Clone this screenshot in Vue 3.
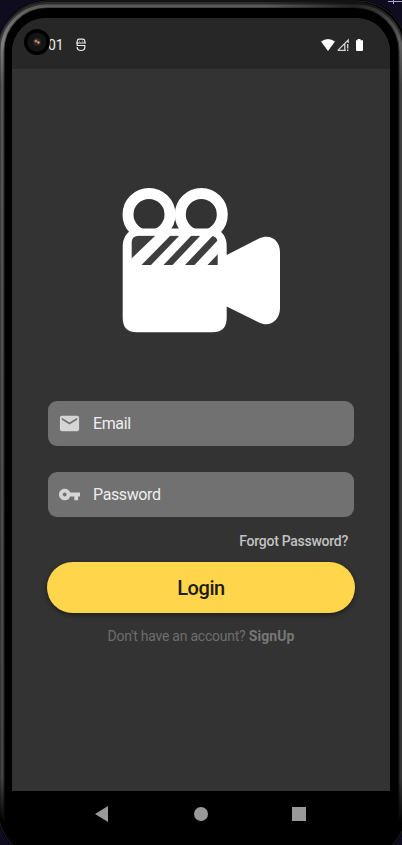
<script setup>
import { ref } from 'vue'

const email = ref('')
const password = ref('')
</script>

<template>
  <div class="device">
    <svg class="frame" viewBox="0 0 402 845" aria-hidden="true">
      <defs>
        <linearGradient id="side" x1="0" y1="0" x2="0" y2="845" gradientUnits="userSpaceOnUse">
          <stop offset="0" stop-color="#555" />
          <stop offset="0.05" stop-color="#808080" />
          <stop offset="0.1" stop-color="#555" />
          <stop offset="0.92" stop-color="#444" />
          <stop offset="0.975" stop-color="#000" />
        </linearGradient>
        <linearGradient id="shade" x1="0" y1="0" x2="402" y2="0" gradientUnits="userSpaceOnUse">
          <stop offset="0.65" stop-color="#000" stop-opacity="0" />
          <stop offset="0.88" stop-color="#000" stop-opacity="0.6" />
          <stop offset="1" stop-color="#000" stop-opacity="0.25" />
        </linearGradient>
      </defs>
      <rect x="-3" y="0" width="411" height="860" rx="50" fill="#000" />
      <rect x="-2" y="1" width="409" height="858" rx="49" fill="none" stroke="#242424" />
      <rect x="1.5" y="5" width="400" height="850" rx="46" fill="none" stroke="url(#side)" stroke-width="6" opacity="0.5" />
      <rect x="2" y="6" width="399" height="846" rx="45" fill="none" stroke="url(#side)" stroke-width="3" />
      <rect x="1.500" y="5" width="400" height="850" rx="45" fill="none" stroke="url(#shade)" stroke-width="6" />
      <rect x="5" y="9" width="393" height="850" rx="42" fill="#000" />
      <path d="M388 1.5h14M393.500 0v4" stroke="#aaa5d5" fill="none" />
    </svg>

    <div class="screen">
      <header class="status">
        <span class="time">01</span>
        <svg class="debug" viewBox="0 0 12 14">
          <path d="M2.200 4.500V3Q2.500 1.200 4 1.200h4Q9.500 1.200 9.800 3V4.500M1 5h10M2.200 5V7.500H9.800V10Q9.500 12.500 6 12.500Q2.500 12.500 2.200 10V9" fill="none" stroke="#eee" stroke-width="1.200" />
          <path d="M4 3.200h1M7 3.200h1" stroke="#aaa" />
        </svg>
        <svg class="signals" viewBox="0 0 44 14">
          <path d="M0 3.500Q7-1.500 14 3.500L7 13Z" fill="#fff" />
          <path d="M16.800 12.400L27.200 2v3M16.800 12.400h8M23.800 6v6.400" fill="none" stroke="#d5d5d5" stroke-width="1.300" />
          <path d="M26.700 6v4.500M26.700 11.500v1.500" stroke="#ddd" stroke-width="1.300" />
          <path d="M35 2.300h1.500V1h3v1.300H42V12q0 1-1 1h-5q-1 0-1-1Z" fill="#fff" />
        </svg>
        <svg class="camera" viewBox="0 0 26 26">
          <circle cx="13" cy="13" r="13" fill="#000" />
          <circle cx="13" cy="13" r="9.500" fill="#141414" />
          <circle cx="13" cy="13" r="4" fill="#30231f" />
          <circle cx="12" cy="12" r="1.600" fill="#a58770" />
          <circle cx="14.500" cy="13.500" r="1.200" fill="#c5a28a" />
        </svg>
      </header>

      <main>
        <svg class="logo" viewBox="0 0 160 148">
          <defs>
            <clipPath id="window"><path d="M10.700 58V56Q11 49.700 18 49.700H89Q96.700 49.700 96.700 57V79H10.700Z" /></clipPath>
          </defs>
          <g fill="none" stroke="#fff" stroke-width="11">
            <circle cx="28" cy="28.500" r="21" />
            <circle cx="80.300" cy="28.500" r="21" />
          </g>
          <path d="M14 42.500H94Q105.700 47 105.700 60V69L138 52.500C150 47 159 55 159 66V122C159 134 149 142 138 136.500L105.700 120.500V132Q105.700 146.300 91 146.300H16Q1.700 146.300 1.700 132V60Q2 47 14 42.500Z" fill="#fff" />
          <g clip-path="url(#window)" fill="#3e3e3e">
            <path d="M10 49.500H34.500L10 73Z" />
            <path d="M49.500 49.500H58.500L30 79H20.500Z" />
            <path d="M70.500 49.500H79.500L51.500 79H42.500Z" />
            <path d="M92 49.500L98 53L73.500 79H64Z" />
            <path d="M97 68V79H86.500Z" />
          </g>
        </svg>

        <form @submit.prevent>
          <label class="field">
            <svg viewBox="0 0 24 24"><path fill="#d5d5d5" d="M20 4H4c-1.100 0-2 .9-2 2v12c0 1.100.9 2 2 2h16c1.100 0 2-.9 2-2V6c0-1.100-.9-2-2-2Zm0 4-8 5-8-5V6l8 5 8-5v2Z" /></svg>
            <input v-model="email" type="email" placeholder="Email" />
          </label>
          <label class="field">
            <svg viewBox="0 0 24 24"><path fill="#d5d5d5" d="M12.650 10A5.990 5.990 0 0 0 7 6c-3.310 0-6 2.690-6 6s2.690 6 6 6a5.990 5.990 0 0 0 5.650-4H17v4h4v-4h2v-4H12.650ZM7 14c-1.100 0-2-.9-2-2s.9-2 2-2 2 .9 2 2-.9 2-2 2Z" /></svg>
            <input v-model="password" type="password" placeholder="Password" />
          </label>
          <a class="forgot">Forgot Password?</a>
          <button>Login</button>
        </form>
        <p>Don't have an account? <b>SignUp</b></p>
      </main>
    </div>

    <nav>
      <svg viewBox="0 0 16 16"><path d="M0 8L13 0V16Z" /></svg>
      <svg viewBox="0 0 16 16"><circle cx="8" cy="8" r="7" /></svg>
      <svg viewBox="0 0 16 16"><rect x="1" y="1" width="14" height="14" /></svg>
    </nav>
  </div>
</template>

<style>
body {
  background: #100c20;
}
</style>

<style scoped>
.device {
  position: relative;
  box-sizing: border-box;
  width: 402px;
  height: 845px;
  padding: 18px 12px 0;
  overflow: hidden;
  font-family: Roboto, sans-serif;
}
.frame {
  position: absolute;
  inset: 0;
  width: 402px;
  height: 845px;
}
.screen {
  position: relative;
  height: 773px;
  background: #333;
  border-radius: 34px 34px 0 0;
  overflow: hidden;
}
.status {
  position: relative;
  display: flex;
  align-items: center;
  box-sizing: border-box;
  height: 51px;
  padding: 3px 26px 0 36px;
  background: #272727;
}
.time {
  width: 27px;
  font-size: 14px;
  line-height: 16px;
  color: #eee;
}
.debug {
  width: 12px;
  height: 14px;
}
.signals {
  width: 44px;
  height: 14px;
  margin-left: auto;
  margin-right: -1px;
}
.camera {
  position: absolute;
  left: 12px;
  top: 11px;
  width: 26px;
  height: 26px;
}
main {
  display: flex;
  flex-direction: column;
  align-items: center;
  padding-top: 117px;
}
.logo {
  width: 160px;
  height: 148px;
}
form {
  display: flex;
  flex-direction: column;
  width: 308px;
  margin-top: 67px;
}
.field {
  display: flex;
  align-items: center;
  box-sizing: border-box;
  height: 45px;
  margin: 0 1px 26px;
  padding-left: 10px;
  border-radius: 9px;
  background: #717171;
}
.field svg {
  width: 23px;
  height: 23px;
}
.field input {
  flex: 1;
  min-width: 0;
  margin-left: 12px;
  padding: 0;
  border: 0;
  outline: 0;
  background: transparent;
  color: #eee;
  font: 16px/20px Roboto, sans-serif;
  letter-spacing: -0.38px;
}
.field input::placeholder {
  color: #eee;
  opacity: 1;
}
.forgot {
  align-self: flex-end;
  margin: -11px 7px 0 0;
  font-size: 14px;
  line-height: 18px;
  font-weight: 500;
  letter-spacing: -0.27px;
  color: #c2c2c2;
}
button {
  height: 51px;
  margin-top: 12px;
  padding: 0;
  border: 0;
  border-radius: 26px;
  background: #ffd54b;
  box-shadow: 0 2px 5px rgba(0, 0, 0, 0.45);
  color: #211c10;
  font: 500 20px/24px Roboto, sans-serif;
  letter-spacing: -0.4px;
}
p {
  margin: 14px 0 0;
  font-size: 14px;
  line-height: 18px;
  letter-spacing: -0.24px;
  color: #6e6e6e;
}
b {
  color: #777;
  letter-spacing: 0.1px;
}
nav {
  position: relative;
  display: flex;
  justify-content: center;
  gap: 82px;
  padding-top: 15px;
}
nav svg {
  width: 16px;
  height: 16px;
  fill: #999;
}
</style>
